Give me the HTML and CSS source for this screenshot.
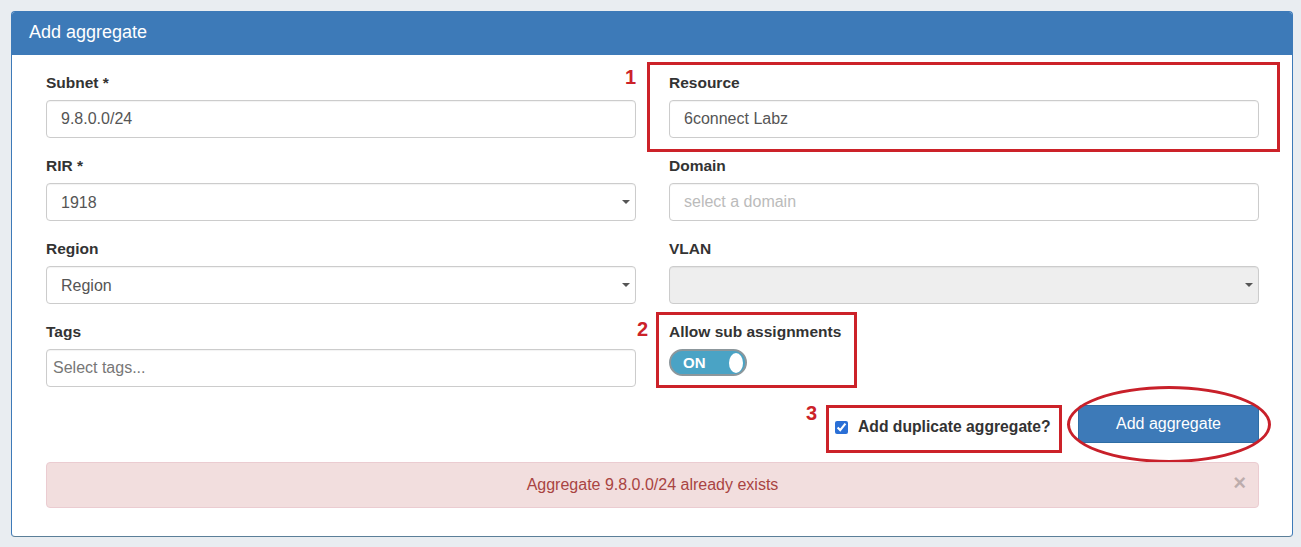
FILE: index.html
```html
<!DOCTYPE html>
<html lang="en">
  <head>
    <meta charset="UTF-8" />
    <title>Add aggregate</title>
    <link rel="stylesheet" href="styles.css">
  </head>
  <body>
    <div class="panel">
      <div class="panel-heading">Add aggregate</div>
      <div class="panel-body">
        <div class="form-grid">
          <div class="form-group">
            <label>Subnet *</label>
            <input type="text" class="form-control" value="9.8.0.0/24" />
          </div>
          <div class="form-group marked mark-1">
            <span class="mark-num">1</span>
            <label>Resource</label>
            <input type="text" class="form-control" value="6connect Labz" />
          </div>

          <div class="form-group">
            <label>RIR *</label>
            <div class="select-wrap">
              <select class="form-control"><option>1918</option></select>
            </div>
          </div>
          <div class="form-group">
            <label>Domain</label>
            <input type="text" class="form-control" placeholder="select a domain" />
          </div>

          <div class="form-group">
            <label>Region</label>
            <div class="select-wrap">
              <select class="form-control"><option>Region</option></select>
            </div>
          </div>
          <div class="form-group">
            <label>VLAN</label>
            <div class="select-wrap">
              <select class="form-control" disabled><option></option></select>
            </div>
          </div>

          <div class="form-group">
            <label>Tags</label>
            <input type="text" class="form-control tags" placeholder="Select tags..." />
          </div>
          <div class="form-group marked mark-2">
            <span class="mark-num">2</span>
            <label>Allow sub assignments</label>
            <div class="toggle">
              <span class="toggle-text">ON</span>
              <span class="toggle-knob"></span>
            </div>
          </div>
        </div>

        <div class="actions">
          <div class="check marked mark-3">
            <span class="mark-num">3</span>
            <input type="checkbox" id="dup" checked />
            <label for="dup">Add duplicate aggregate?</label>
          </div>
          <div class="btn-wrap">
            <button class="btn-primary">Add aggregate</button>
          </div>
        </div>

        <div class="alert-danger">
          Aggregate 9.8.0.0/24 already exists
          <span class="close">&times;</span>
        </div>
      </div>
    </div>
  </body>
</html>
```

FILE: styles.css
```css
body {
  margin: 0;
  padding: 11px 8px 10px 11px;
  background-color: #e9edf1;
  font-family: "Liberation Sans", Arial, sans-serif;
  color: #333;
}

.panel {
  width: 1280px;
  background: #fff;
  border: 1px solid #3d7ab8;
  border-bottom-color: #5b7f99;
  border-radius: 4px;
}

.panel-heading {
  height: 43px;
  line-height: 41px;
  padding: 0 17px;
  background-color: #3d7ab8;
  color: #fff;
  font-size: 18px;
  border-radius: 3px 3px 0 0;
}

.panel-body {
  padding: 18px 33px 28px 34px;
}

.form-grid {
  display: grid;
  grid-template-columns: 590px 590px;
  column-gap: 33px;
  row-gap: 18px;
}

.form-group label {
  display: block;
  font-size: 15.5px;
  font-weight: bold;
  line-height: 19px;
  margin-bottom: 8px;
}

.form-control {
  display: block;
  width: 100%;
  height: 38px;
  box-sizing: border-box;
  padding: 0 14px;
  border: 1px solid #ccc;
  border-radius: 4px;
  background: #fff;
  font-family: "Liberation Sans", Arial, sans-serif;
  font-size: 16px;
  color: #555;
  box-shadow: inset 0 1px 1px rgba(0, 0, 0, 0.05);
}

.form-control::placeholder {
  color: #bbb;
}

.form-control.tags {
  padding: 0 6px;
}

.form-control.tags::placeholder {
  color: #777;
}

select.form-control {
  appearance: none;
  -webkit-appearance: none;
}

select.form-control:disabled {
  background-color: #eee;
  opacity: 1;
}

.select-wrap {
  position: relative;
}

.select-wrap::after {
  content: "";
  position: absolute;
  right: 6px;
  top: 17px;
  border-left: 4px solid transparent;
  border-right: 4px solid transparent;
  border-top: 4px solid #555;
}

/* toggle switch */
.toggle {
  width: 78px;
  height: 27px;
  box-sizing: border-box;
  border: 2px solid #8c979c;
  border-radius: 14px;
  background-color: #4aa3c5;
  display: flex;
  align-items: center;
  justify-content: space-between;
  padding: 0 2px 0 12px;
}

.toggle-text {
  color: #fff;
  font-weight: bold;
  font-size: 15px;
}

.toggle-knob {
  width: 14px;
  height: 20px;
  background: #fff;
  border-radius: 50%;
}

.actions {
  display: flex;
  justify-content: flex-end;
  align-items: flex-start;
  gap: 16px;
  margin-top: 18px;
}

.check {
  display: flex;
  align-items: center;
  width: 236px;
  height: 48px;
  box-sizing: border-box;
  padding: 0 0 4px 9px;
}

.check input {
  width: 13px;
  height: 13px;
  margin: 0 10px 0 0;
  accent-color: #2a6fd6;
}

.check label {
  font-size: 15.7px;
  font-weight: bold;
  white-space: nowrap;
}

.btn-wrap {
  position: relative;
}

.btn-wrap::after {
  content: "";
  position: absolute;
  left: -11px;
  top: -19px;
  width: 198px;
  height: 71px;
  border: 3px solid #c8202a;
  border-radius: 50%;
}

.btn-primary {
  width: 181px;
  height: 38px;
  background-color: #3d7ab8;
  border: 1px solid #2e6da4;
  border-radius: 4px;
  color: #fff;
  font-family: "Liberation Sans", Arial, sans-serif;
  font-size: 16px;
}

.alert-danger {
  position: relative;
  margin-top: 9px;
  padding: 13px 15px;
  line-height: 18px;
  background-color: #f2dede;
  border: 1px solid #ebccd1;
  border-radius: 4px;
  color: #a94442;
  font-size: 16px;
  text-align: center;
}

.close {
  position: absolute;
  right: 12px;
  top: 11px;
  font-size: 22px;
  font-weight: bold;
  color: #000;
  opacity: 0.22;
}

/* red annotation marks */
.marked {
  position: relative;
}

.marked::before {
  content: "";
  position: absolute;
  border: 3px solid #cc2229;
}

.mark-1::before {
  left: -22px;
  top: -11px;
  right: -21px;
  bottom: -14px;
}

.mark-2::before {
  left: -13px;
  top: -10px;
  width: 195px;
  height: 70px;
}

.mark-3::before {
  left: 0;
  top: 0;
  right: 0;
  bottom: 0;
}

.mark-num {
  position: absolute;
  color: #cc2229;
  font-weight: bold;
  font-size: 20px;
}

.mark-1 .mark-num {
  left: -44px;
  top: -7px;
}

.mark-2 .mark-num {
  left: -32px;
  top: -4px;
}

.mark-3 .mark-num {
  left: -20px;
  top: -3px;
}
```
